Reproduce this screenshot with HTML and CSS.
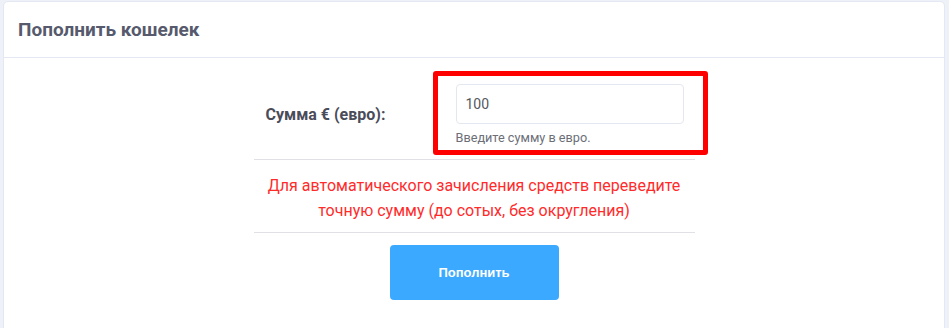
FILE: index.html
```html
<!DOCTYPE html>
<html>
<head>
 <meta charset="UTF-8">
 <title>Пополнить кошелек</title>
 <link rel="stylesheet" href="styles.css">
</head>
<body>
<div class="card">
  <div class="card-head">Пополнить кошелек</div>
  <form class="topup">
    <div class="row">
      <label class="lbl" for="sum">Сумма € (евро):</label>
      <div class="mark">
        <input class="inp" id="sum" type="text" value="100">
        <div class="hint">Введите сумму в евро.</div>
      </div>
    </div>
    <p class="warn">Для автоматического зачисления средств переведите точную сумму (до сотых, без округления)</p>
    <div class="act"><button type="button" class="btn">Пополнить</button></div>
  </form>
</div>
</body>
</html>
```

FILE: styles.css
```css
body { margin: 0; padding: 1px 4px 0 3px; background: #eef1f8;
  font-family: Roboto, "Liberation Sans", sans-serif; }
.card { background: #fff; border: 1px solid #e3e8f2; border-radius: 5px;
  height: 340px; }
.card-head { height: 55px; display: flex; align-items: center;
  padding: 0 14px; border-bottom: 1px solid #e3e8f2; font-size: 19px;
  font-weight: bold; color: #565a6c; }
.topup { width: 441px; margin: 13px auto 0; }
.row { display: flex; align-items: center; border-bottom: 1px solid #e0e0e6;
  padding-bottom: 4px; }
.lbl { flex: none; width: 167px; padding-left: 12px; font-size: 16px;
  font-weight: bold; color: #4a4c5a; margin-top: 3px; }
.mark { flex: none; border: 5px solid #ff0000; border-radius: 3px;
  padding: 8px 0 0 18px; height: 66px; width: 247px; }
.inp { display: block; box-sizing: border-box; width: 228px; height: 40px;
  border: 1px solid #e3e7ef; border-radius: 4px; padding: 0 9px;
  font: 14px Roboto, "Liberation Sans", sans-serif; color: #555760; outline: none; }
.hint { font-size: 12.7px; color: #6c6e78; margin-top: 6px; }
.warn { margin: 0; padding: 13px 0 9px; text-align: center; font-size: 16px;
  line-height: 25px; color: #ff2b2b; border-bottom: 1px solid #e0e0e6; }
.act { display: flex; justify-content: center; padding-top: 12px; }
.btn { width: 169px; height: 55px; border: 0; border-radius: 4px;
  background: #3ba9ff; color: #fff;
  font: bold 13px "Liberation Sans", Arial, sans-serif; }
```
